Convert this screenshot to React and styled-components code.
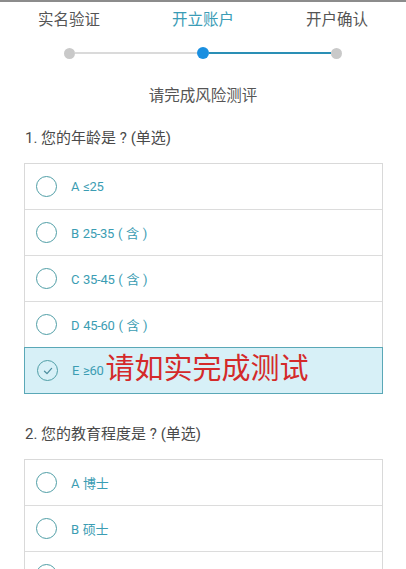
import React, { useState } from 'react';
import styled, { createGlobalStyle } from 'styled-components';

const GlobalStyle = createGlobalStyle`
  html, body {
    margin: 0;
    padding: 0;
    background: #fff;
  }
  body {
    font-family: Roboto, "Noto Sans CJK SC", sans-serif;
    color: #4a4a4a;
  }
`;

const Page = styled.div`
  width: 406px;
  height: 569px;
  overflow: hidden;
  border-top: 2px solid #8c8c8c;
  box-sizing: border-box;
`;

const Steps = styled.div`
  display: grid;
  grid-template-columns: repeat(3, 1fr);
  padding: 7px 2px 0;
`;

const StepLabel = styled.div`
  text-align: center;
  font-size: 15.5px;
  line-height: 22px;
  color: ${props => (props.active ? '#3a9cb6' : '#555')};
`;

const Progress = styled.div`
  display: flex;
  align-items: center;
  padding: 0 64px 0 64px;
  margin-top: 16px;
  height: 12px;
`;

const Dot = styled.span`
  flex: none;
  width: ${props => (props.active ? 12 : 11)}px;
  height: ${props => (props.active ? 12 : 11)}px;
  border-radius: 50%;
  background: ${props => (props.active ? '#1a8fe0' : '#c9c9c9')};
`;

const Line = styled.span`
  flex: 1;
  height: ${props => (props.done ? 2.5 : 2)}px;
  background: ${props => (props.done ? '#2a8fb5' : '#dadada')};
`;

const Heading = styled.div`
  text-align: center;
  font-size: 15.5px;
  line-height: 22px;
  color: #555;
  margin-top: 26px;
`;

const Question = styled.section`
  padding: 0 23px 0 24px;
  margin-top: ${props => props.gap}px;
`;

const QuestionTitle = styled.div`
  font-size: 15px;
  line-height: 22px;
  color: #4a4a4a;
  padding-left: 1px;
  margin-bottom: 14px;
`;

const OptionList = styled.div`
  border: 1px solid #d9d9d9;
  border-bottom: none;
`;

const Option = styled.div`
  position: relative;
  display: flex;
  align-items: center;
  height: 46px;
  box-sizing: border-box;
  padding-left: 11px;
  border-bottom: 1px solid #dcdcdc;
  background: ${props => (props.selected ? '#d7f0f7' : '#fff')};
  ${props => props.selected && `
    margin: -1px -1px 0;
    padding-left: 12px;
    border: 1.5px solid #5aa8b7;
    height: 47px;
  `}
  cursor: pointer;
`;

const Radio = styled.span`
  flex: none;
  width: 19px;
  height: 19px;
  border: 1.5px solid #4f9ea6;
  border-radius: 50%;
  display: flex;
  align-items: center;
  justify-content: center;
  color: #4f8fa0;
`;

const OptionText = styled.span`
  margin-left: 14px;
  font-size: 13px;
  letter-spacing: -0.3px;
  word-spacing: 1px;
  color: #3b9db3;
`;

const Note = styled.span`
  margin-left: 2px;
  font-size: 29px;
  line-height: 1;
  color: #d42a2a;
  font-family: "Noto Sans CJK SC", sans-serif;
  margin-top: -8px;
`;

const Check = () => (
  <svg width="12" height="12" viewBox="0 0 12 12">
    <path d="M2.5 6.2 L5 8.6 L9.6 3.4" fill="none" stroke="currentColor" strokeWidth="1.3" strokeLinecap="round" strokeLinejoin="round" />
  </svg>
);

const questions = [
  {
    title: '1. 您的年龄是 ? (单选)',
    options: ['A ≤25', 'B 25-35 ( 含 )', 'C 35-45 ( 含 )', 'D 45-60 ( 含 )', 'E ≥60'],
    selected: 4,
    gap: 20,
  },
  {
    title: '2. 您的教育程度是 ? (单选)',
    options: ['A 博士', 'B 硕士', 'C 本科'],
    selected: -1,
    gap: 29,
  },
];

const steps = ['实名验证', '开立账户', '开户确认'];

export default function App() {
  const [answers, setAnswers] = useState(questions.map(q => q.selected));

  const pick = (qi, oi) => {
    setAnswers(prev => prev.map((v, i) => (i === qi ? oi : v)));
  };

  return (
    <Page>
      <GlobalStyle />
      <Steps>
        {steps.map((s, i) => (
          <StepLabel key={s} active={i === 1}>{s}</StepLabel>
        ))}
      </Steps>
      <Progress>
        <Dot />
        <Line />
        <Dot active />
        <Line done />
        <Dot />
      </Progress>
      <Heading>请完成风险测评</Heading>
      {questions.map((q, qi) => (
        <Question key={q.title} gap={q.gap}>
          <QuestionTitle>{q.title}</QuestionTitle>
          <OptionList>
            {q.options.map((o, oi) => {
              const sel = answers[qi] === oi;
              return (
                <Option key={o} selected={sel} onClick={() => pick(qi, oi)}>
                  <Radio>{sel && <Check />}</Radio>
                  <OptionText>{o}</OptionText>
                  {sel && qi === 0 && <Note>请如实完成测试</Note>}
                </Option>
              );
            })}
          </OptionList>
        </Question>
      ))}
    </Page>
  );
}
